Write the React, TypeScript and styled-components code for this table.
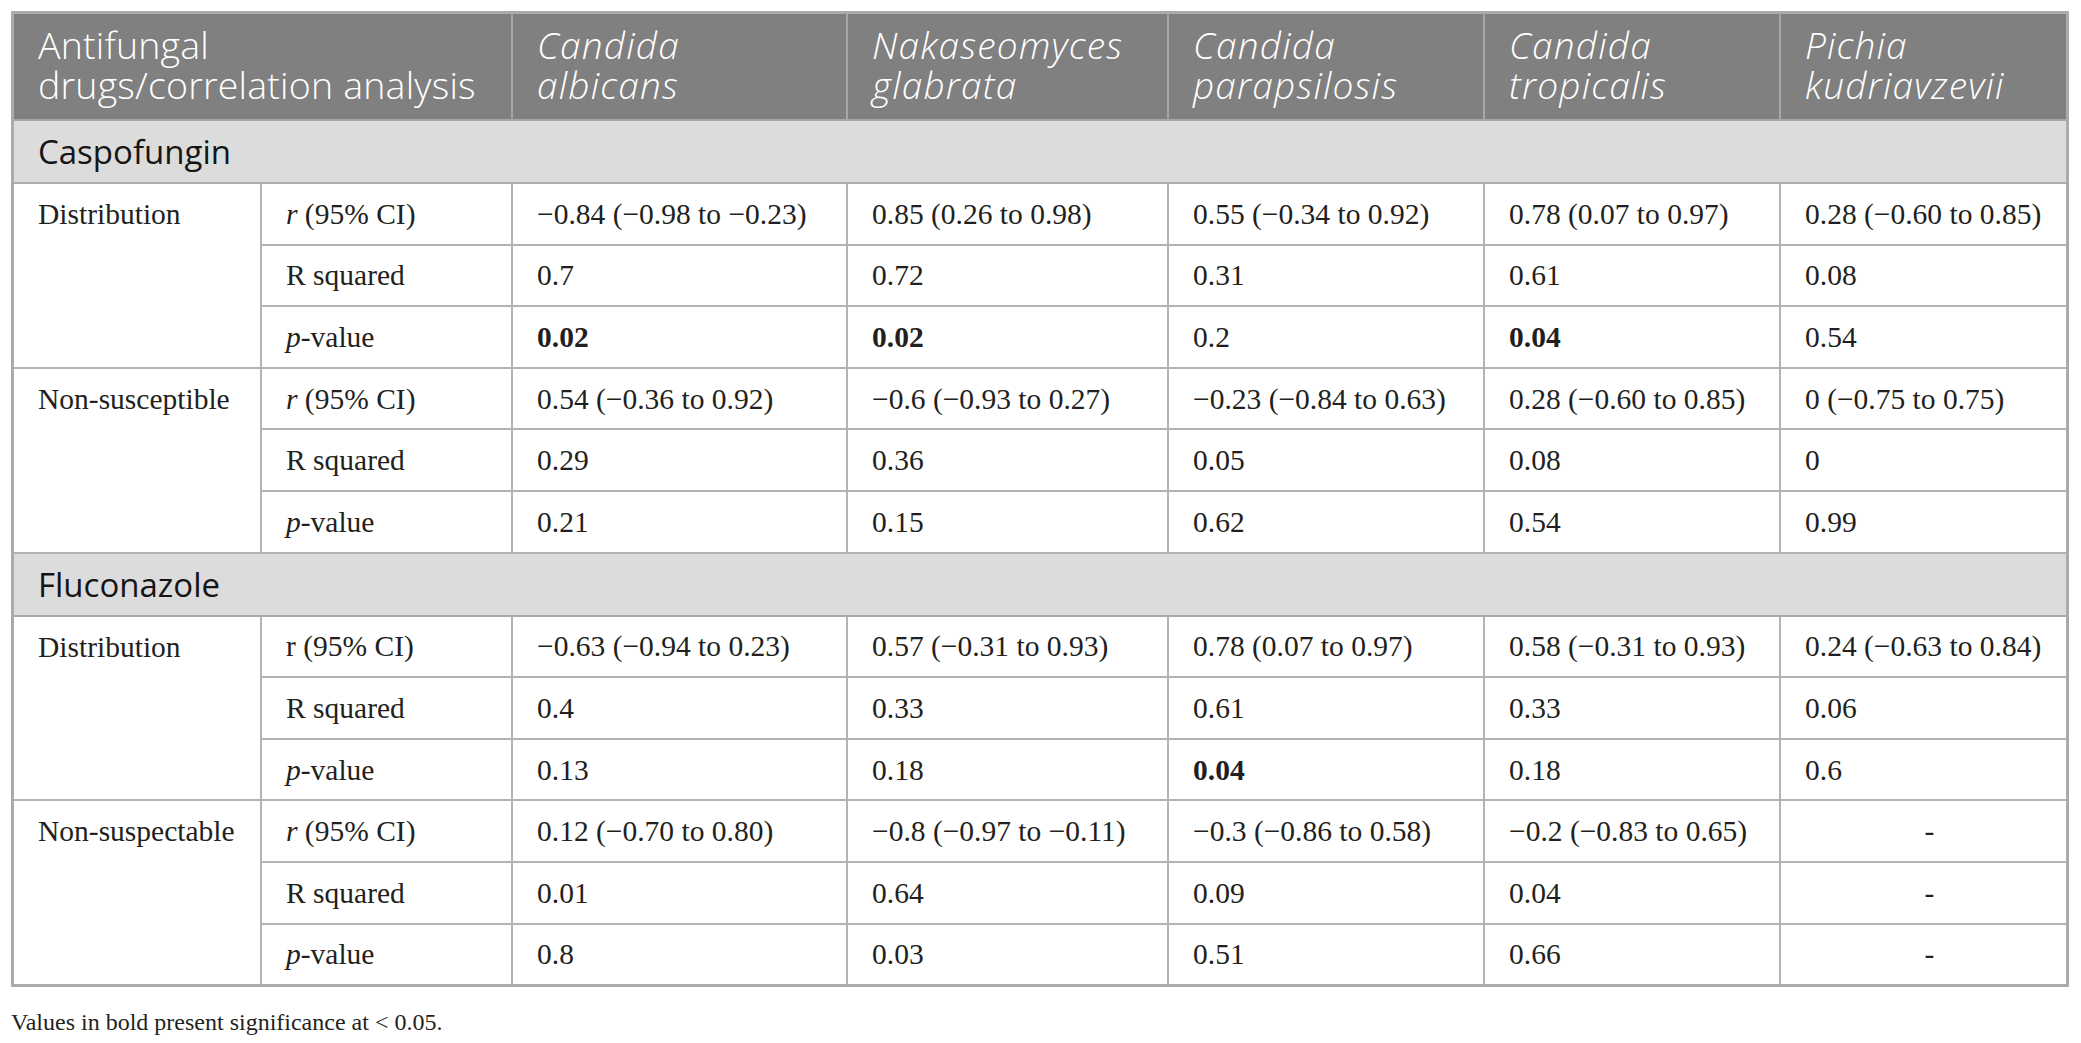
import React from "react";
import styled, { createGlobalStyle } from "styled-components";

type Measure = "r" | "rPlain" | "R" | "p";

interface DataRow {
  measure: Measure;
  values: string[];
}

interface Group {
  label: string;
  rows: DataRow[];
}

interface Section {
  name: string;
  groups: Group[];
}

const species = [
  ["Candida", "albicans"],
  ["Nakaseomyces", "glabrata"],
  ["Candida", "parapsilosis"],
  ["Candida", "tropicalis"],
  ["Pichia", "kudriavzevii"],
];

// values starting with * are shown in bold
const sections: Section[] = [
  {
    name: "Caspofungin",
    groups: [
      {
        label: "Distribution",
        rows: [
          {
            measure: "r",
            values: [
              "−0.84 (−0.98 to −0.23)",
              "0.85 (0.26 to 0.98)",
              "0.55 (−0.34 to 0.92)",
              "0.78 (0.07 to 0.97)",
              "0.28 (−0.60 to 0.85)",
            ],
          },
          { measure: "R", values: ["0.7", "0.72", "0.31", "0.61", "0.08"] },
          { measure: "p", values: ["*0.02", "*0.02", "0.2", "*0.04", "0.54"] },
        ],
      },
      {
        label: "Non-susceptible",
        rows: [
          {
            measure: "r",
            values: [
              "0.54 (−0.36 to 0.92)",
              "−0.6 (−0.93 to 0.27)",
              "−0.23 (−0.84 to 0.63)",
              "0.28 (−0.60 to 0.85)",
              "0 (−0.75 to 0.75)",
            ],
          },
          { measure: "R", values: ["0.29", "0.36", "0.05", "0.08", "0"] },
          { measure: "p", values: ["0.21", "0.15", "0.62", "0.54", "0.99"] },
        ],
      },
    ],
  },
  {
    name: "Fluconazole",
    groups: [
      {
        label: "Distribution",
        rows: [
          {
            measure: "rPlain",
            values: [
              "−0.63 (−0.94 to 0.23)",
              "0.57 (−0.31 to 0.93)",
              "0.78 (0.07 to 0.97)",
              "0.58 (−0.31 to 0.93)",
              "0.24 (−0.63 to 0.84)",
            ],
          },
          { measure: "R", values: ["0.4", "0.33", "0.61", "0.33", "0.06"] },
          { measure: "p", values: ["0.13", "0.18", "*0.04", "0.18", "0.6"] },
        ],
      },
      {
        label: "Non-suspectable",
        rows: [
          {
            measure: "r",
            values: [
              "0.12 (−0.70 to 0.80)",
              "−0.8 (−0.97 to −0.11)",
              "−0.3 (−0.86 to 0.58)",
              "−0.2 (−0.83 to 0.65)",
              "-",
            ],
          },
          { measure: "R", values: ["0.01", "0.64", "0.09", "0.04", "-"] },
          { measure: "p", values: ["0.8", "0.03", "0.51", "0.66", "-"] },
        ],
      },
    ],
  },
];

const colWidths = [247, 251, 335, 321, 316, 296, 286];

const GlobalStyle = createGlobalStyle`
  html, body {
    margin: 0;
    padding: 0;
    background: #ffffff;
  }
`;

const Page = styled.div`
  padding: 11px 12px 0 11px;
  font-family: "Liberation Serif", "Times New Roman", serif;
  color: #231f20;
`;

const Frame = styled.div`
  width: 2052px;
  border: 3px solid #ababab;
`;

const Table = styled.table`
  width: 100%;
  table-layout: fixed;
  border-collapse: collapse;
  border-style: hidden;
`;

const HeadCell = styled.th<{ italic?: boolean }>`
  height: 102px;
  padding: 0 12px 3px 24px;
  background: #808080;
  color: #ffffff;
  border: 2px solid #a6a6a6;
  font-family: "Open Sans", "Noto Sans", sans-serif;
  font-weight: 300;
  font-style: ${(p) => (p.italic ? "italic" : "normal")};
  font-size: ${(p) => (p.italic ? "37px" : "37.5px")};
  letter-spacing: ${(p) => (p.italic ? "1.2px" : "0.2px")};
  line-height: 40px;
  text-align: left;
  vertical-align: middle;
  white-space: nowrap;
`;

const SectionCell = styled.td`
  height: 61px;
  padding: 0 24px;
  background: #dcdcdc;
  border: 2px solid #ababab;
  font-family: "Open Sans", "Noto Sans", sans-serif;
  font-size: 33px;
  color: #151515;
  vertical-align: middle;
`;

const Cell = styled.td<{ center?: boolean; top?: boolean }>`
  height: 59.6px;
  padding: 0 12px 0 24px;
  border: 2px solid #b3b3b3;
  font-size: 29.5px;
  line-height: 32px;
  text-align: ${(p) => (p.center ? "center" : "left")};
  vertical-align: ${(p) => (p.top ? "top" : "middle")};
  padding-top: ${(p) => (p.top ? "14px" : "0")};
  white-space: nowrap;
`;

const Strong = styled.b`
  font-weight: 700;
`;

const Note = styled.p`
  margin: 22px 0 0 0;
  font-size: 24px;
  color: #231f20;
`;

const MeasureLabel: React.FC<{ measure: Measure }> = ({ measure }) => {
  if (measure === "r") {
    return (
      <>
        <i>r</i> (95% CI)
      </>
    );
  }
  if (measure === "rPlain") return <>r (95% CI)</>;
  if (measure === "R") return <>R squared</>;
  return (
    <>
      <i>p</i>-value
    </>
  );
};

const ValueCell: React.FC<{ value: string }> = ({ value }) => {
  if (value === "-") return <Cell center>-</Cell>;
  if (value.startsWith("*")) {
    return (
      <Cell>
        <Strong>{value.slice(1)}</Strong>
      </Cell>
    );
  }
  return <Cell>{value}</Cell>;
};

const App: React.FC = () => {
  return (
    <Page>
      <GlobalStyle />
      <Frame>
        <Table>
          <colgroup>
            {colWidths.map((w, i) => (
              <col key={i} style={{ width: w }} />
            ))}
          </colgroup>
          <thead>
            <tr>
              <HeadCell colSpan={2}>
                Antifungal
                <br />
                drugs/correlation analysis
              </HeadCell>
              {species.map(([genus, name]) => (
                <HeadCell italic key={genus + name}>
                  {genus}
                  <br />
                  {name}
                </HeadCell>
              ))}
            </tr>
          </thead>
          <tbody>
            {sections.map((section) => (
              <React.Fragment key={section.name}>
                <tr>
                  <SectionCell colSpan={7}>{section.name}</SectionCell>
                </tr>
                {section.groups.map((group) =>
                  group.rows.map((row, index) => (
                    <tr key={group.label + row.measure + index}>
                      {index === 0 && (
                        <Cell top rowSpan={group.rows.length}>
                          {group.label}
                        </Cell>
                      )}
                      <Cell>
                        <MeasureLabel measure={row.measure} />
                      </Cell>
                      {row.values.map((value, i) => (
                        <ValueCell key={i} value={value} />
                      ))}
                    </tr>
                  ))
                )}
              </React.Fragment>
            ))}
          </tbody>
        </Table>
      </Frame>
      <Note>Values in bold present significance at &lt; 0.05.</Note>
    </Page>
  );
};

export default App;
